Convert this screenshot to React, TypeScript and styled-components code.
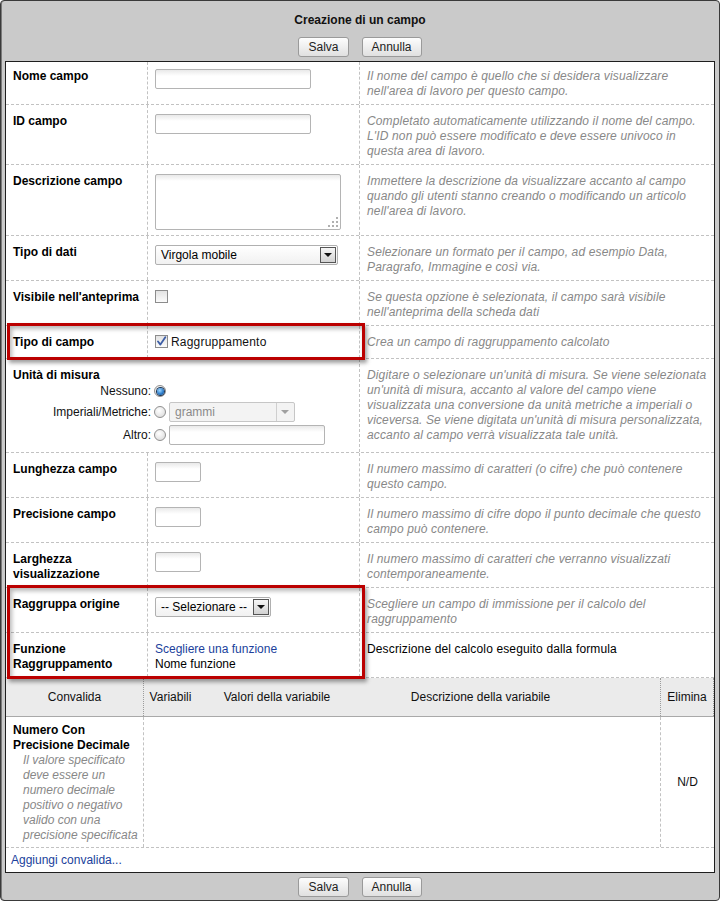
import React from "react";
import styled, { createGlobalStyle } from "styled-components";

const Global = createGlobalStyle`
  html, body { margin: 0; padding: 0; background: #fff; overflow: hidden; }
  body {
    font-family: "Liberation Sans", Arial, sans-serif;
    font-size: 12px;
    line-height: 15px;
    color: #000;
  }
  * { box-sizing: border-box; }
`;

const Frame = styled.div`
  width: 720px;
  border: 1px solid #3a3a3a;
  border-radius: 4px;
  background: #cacaca;
  padding: 0 4px 3px 4px;
  box-shadow: inset 1px 0 0 #7a7a7a;
`;

const Header = styled.div`
  display: flex;
  flex-direction: column;
  align-items: center;
  padding: 12px 0 4px;
`;

const Title = styled.div`
  font-weight: bold;
  color: #111;
`;

const ButtonBar = styled.div<{ $top?: number }>`
  display: flex;
  justify-content: center;
  gap: 13px;
  margin-top: ${(p) => p.$top ?? 0}px;
`;

const Button = styled.button`
  height: 20px;
  padding: 0 9px;
  font: 12px "Liberation Sans", Arial, sans-serif;
  color: #222;
  border: 1px solid #9a9a9a;
  border-radius: 3px;
  background: linear-gradient(#fdfdfd, #e0e0e0);
`;

const Panel = styled.div`
  background: #fff;
  border: 1px solid #1e1e1e;
`;

const FormRow = styled.div<{ $first?: boolean }>`
  display: grid;
  grid-template-columns: 142px 212px 1fr;
  border-bottom: 1px dashed #c2c2c2;
  & > * {
    padding: ${(p) => (p.$first ? 7 : 9)}px 4px 5px 7px;
  }
`;

const LabelCell = styled.div`
  font-weight: bold;
  color: #000;
  border-right: 1px dashed #c2c2c2;
`;

const FieldCell = styled.div`
  border-right: 1px dashed #c2c2c2;
`;

const WideCell = styled.div`
  grid-column: span 2;
  border-right: 1px dashed #c2c2c2;
`;

const DescCell = styled.div<{ $plain?: boolean }>`
  font-style: ${(p) => (p.$plain ? "normal" : "italic")};
  color: ${(p) => (p.$plain ? "#000" : "#888")};
  letter-spacing: 0.14px;
`;

const Bold = styled.div`
  font-weight: bold;
`;

const Highlight = styled.div`
  position: relative;
  &::after {
    content: "";
    position: absolute;
    left: 1px;
    top: -3px;
    bottom: -1px;
    width: 352px;
    border: 3px solid #bb0000;
    box-shadow: 2px 3px 4px rgba(0, 0, 0, 0.38), inset 2px 3px 4px rgba(0, 0, 0, 0.28);
    pointer-events: none;
  }
`;

const TextInput = styled.input<{ $w: number }>`
  display: block;
  width: ${(p) => p.$w}px;
  height: 20px;
  margin: 0;
  padding: 0 4px;
  border: 1px solid #b4b4b4;
  border-radius: 2px;
  background: linear-gradient(#e9e9e9, #fff 6px);
  font: 12px "Liberation Sans", Arial, sans-serif;
  outline: none;
`;

const TextArea = styled.div`
  display: flex;
  align-items: flex-end;
  justify-content: flex-end;
  width: 186px;
  height: 56px;
  padding: 2px;
  border: 1px solid #b4b4b4;
  border-radius: 2px;
  background: linear-gradient(#e9e9e9, #fff 6px);
`;

const SelectBox = styled.div<{ $w: number; $disabled?: boolean }>`
  display: flex;
  align-items: center;
  width: ${(p) => p.$w}px;
  height: 20px;
  padding-left: 5px;
  border: 1px solid ${(p) => (p.$disabled ? "#c6c6c6" : "#b0b0b0")};
  border-radius: 2px;
  background: ${(p) => (p.$disabled ? "#f3f3f3" : "linear-gradient(#fff, #f1f1f1)")};
  color: ${(p) => (p.$disabled ? "#8a8a8a" : "#000")};
`;

const SelectText = styled.span`
  flex: 1;
  white-space: nowrap;
`;

const ArrowBox = styled.span<{ $disabled?: boolean }>`
  display: flex;
  align-items: center;
  justify-content: center;
  width: ${(p) => (p.$disabled ? 17 : 16)}px;
  height: ${(p) => (p.$disabled ? 18 : 16)}px;
  margin-right: 1px;
  border: ${(p) => (p.$disabled ? "none" : "1px solid #555")};
  border-left: 1px solid ${(p) => (p.$disabled ? "#cfcfcf" : "#555")};
  background: ${(p) => (p.$disabled ? "#f3f3f3" : "linear-gradient(#f6f6f6, #d2d2d2)")};
`;

const Caret = styled.span<{ $disabled?: boolean }>`
  width: 0;
  height: 0;
  border-left: 4px solid transparent;
  border-right: 4px solid transparent;
  border-top: 4px solid ${(p) => (p.$disabled ? "#a0a0a0" : "#111")};
`;

const Check = styled.span`
  display: flex;
  align-items: center;
  justify-content: center;
  flex: none;
  width: 13px;
  height: 13px;
  border: 1px solid #8c8c8c;
  background: linear-gradient(#e2e2e2, #fbfbfb);
`;

const CheckLine = styled.div`
  display: flex;
  align-items: flex-start;
  gap: 3px;
  min-height: 18px;
  color: #111;
  letter-spacing: 0.2px;
`;

const UnitGrid = styled.div`
  display: grid;
  grid-template-columns: 138px 12px auto;
  grid-template-rows: 16px 20px 20px;
  column-gap: 3px;
  row-gap: 3px;
  align-items: center;
  justify-items: start;
  margin-bottom: 2px;
`;

const UnitLabel = styled.span`
  justify-self: end;
  color: #111;
  white-space: nowrap;
`;

const Radio = styled.span<{ $on?: boolean }>`
  display: flex;
  align-items: center;
  justify-content: center;
  width: 12px;
  height: 12px;
  border-radius: 50%;
  border: 1px solid #8f8f8f;
  background: radial-gradient(circle at 40% 35%, #fff, #d6d6d6);
  &::after {
    content: "";
    display: ${(p) => (p.$on ? "block" : "none")};
    width: 7px;
    height: 7px;
    border-radius: 50%;
    background: radial-gradient(circle at 40% 35%, #9fd8ff, #2577c8 60%, #0e3d78);
    box-shadow: 0 0 0 1px #1d3553;
  }
`;

const Link = styled.a`
  color: #203f9c;
  text-decoration: none;
`;

const ValGrid = styled.div`
  display: grid;
  grid-template-columns: 138px 53px 160px 247px 56px 1fr;
`;

const ValHead = styled(ValGrid)`
  background: #ebebeb;
  border-bottom: 1px solid #a9a9a9;
`;

const HeadCell = styled.div<{ $divR?: boolean; $divL?: boolean }>`
  text-align: center;
  white-space: nowrap;
  color: #111;
  padding: 12px 0 11px;
  border-right: ${(p) => (p.$divR ? "1px dotted #9c9c9c" : "none")};
  border-left: ${(p) => (p.$divL ? "1px dotted #9c9c9c" : "none")};
`;

const ValBody = styled(ValGrid)`
  border-bottom: 1px dashed #c2c2c2;
`;

const RuleCell = styled.div`
  padding: 6px 3px 4px 7px;
  border-right: 1px dashed #c2c2c2;
`;

const RuleDesc = styled.div`
  padding-left: 10px;
  font-style: italic;
  color: #888;
`;

const EmptyCell = styled.div`
  grid-column: 2 / 6;
`;

const DelCell = styled.div`
  display: flex;
  align-items: center;
  justify-content: center;
  border-left: 1px dashed #c2c2c2;
  color: #111;
`;

const AddRow = styled.div`
  padding: 5px 5px 4px;
`;

function Grip() {
  const dots = [
    [9, 1],
    [5, 5],
    [9, 5],
    [1, 9],
    [5, 9],
    [9, 9],
  ];
  return (
    <svg width="11" height="11" viewBox="0 0 11 11">
      {dots.map(([x, y]) => (
        <rect key={`${x}-${y}`} x={x} y={y} width="2" height="2" fill="#b0b0b0" />
      ))}
    </svg>
  );
}

function CheckMark() {
  return (
    <svg width="11" height="11" viewBox="0 0 11 11">
      <path d="M2 5.5 L4.4 8.6 L9.3 1.2" fill="none" stroke="#3d5ea6" strokeWidth="1.8" strokeLinecap="round" strokeLinejoin="round" />
    </svg>
  );
}

function Select({ w, text, disabled }: { w: number; text: string; disabled?: boolean }) {
  return (
    <SelectBox $w={w} $disabled={disabled}>
      <SelectText>{text}</SelectText>
      <ArrowBox $disabled={disabled}>
        <Caret $disabled={disabled} />
      </ArrowBox>
    </SelectBox>
  );
}

export default function App() {
  return (
    <>
      <Global />
      <Frame>
        <Header>
          <Title>Creazione di un campo</Title>
          <ButtonBar $top={9}>
            <Button>Salva</Button>
            <Button>Annulla</Button>
          </ButtonBar>
        </Header>
        <Panel>
          <FormRow $first>
            <LabelCell>Nome campo</LabelCell>
            <FieldCell>
              <TextInput $w={156} readOnly />
            </FieldCell>
            <DescCell>Il nome del campo è quello che si desidera visualizzare nell'area di lavoro per questo campo.</DescCell>
          </FormRow>
          <FormRow>
            <LabelCell>ID campo</LabelCell>
            <FieldCell>
              <TextInput $w={156} readOnly />
            </FieldCell>
            <DescCell>
              Completato automaticamente utilizzando il nome del campo. L'ID non può essere modificato e deve essere univoco in questa area di lavoro.
            </DescCell>
          </FormRow>
          <FormRow>
            <LabelCell>Descrizione campo</LabelCell>
            <FieldCell>
              <TextArea>
                <Grip />
              </TextArea>
            </FieldCell>
            <DescCell>
              Immettere la descrizione da visualizzare accanto al campo quando gli utenti stanno creando o modificando un articolo nell'area di lavoro.
            </DescCell>
          </FormRow>
          <FormRow>
            <LabelCell>Tipo di dati</LabelCell>
            <FieldCell>
              <Select w={183} text="Virgola mobile" />
            </FieldCell>
            <DescCell>Selezionare un formato per il campo, ad esempio Data, Paragrafo, Immagine e così via.</DescCell>
          </FormRow>
          <FormRow>
            <LabelCell>Visibile nell'anteprima</LabelCell>
            <FieldCell>
              <Check />
            </FieldCell>
            <DescCell>Se questa opzione è selezionata, il campo sarà visibile nell'anteprima della scheda dati</DescCell>
          </FormRow>
          <Highlight>
            <FormRow>
              <LabelCell>Tipo di campo</LabelCell>
              <FieldCell>
                <CheckLine>
                  <Check>
                    <CheckMark />
                  </Check>
                  <span>Raggruppamento</span>
                </CheckLine>
              </FieldCell>
              <DescCell>Crea un campo di raggruppamento calcolato</DescCell>
            </FormRow>
          </Highlight>
          <FormRow>
            <WideCell>
              <Bold>Unità di misura</Bold>
              <UnitGrid>
                <UnitLabel>Nessuno:</UnitLabel>
                <Radio $on />
                <span />
                <UnitLabel>Imperiali/Metriche:</UnitLabel>
                <Radio />
                <Select w={126} text="grammi" disabled />
                <UnitLabel>Altro:</UnitLabel>
                <Radio />
                <TextInput $w={156} readOnly />
              </UnitGrid>
            </WideCell>
            <DescCell>
              Digitare o selezionare un'unità di misura. Se viene selezionata un'unità di misura, accanto al valore del campo viene visualizzata una conversione da unità metriche a imperiali o viceversa. Se viene digitata un'unità di misura personalizzata, accanto al campo verrà visualizzata tale unità.
            </DescCell>
          </FormRow>
          <FormRow>
            <LabelCell>Lunghezza campo</LabelCell>
            <FieldCell>
              <TextInput $w={46} readOnly />
            </FieldCell>
            <DescCell>Il numero massimo di caratteri (o cifre) che può contenere questo campo.</DescCell>
          </FormRow>
          <FormRow>
            <LabelCell>Precisione campo</LabelCell>
            <FieldCell>
              <TextInput $w={46} readOnly />
            </FieldCell>
            <DescCell>Il numero massimo di cifre dopo il punto decimale che questo campo può contenere.</DescCell>
          </FormRow>
          <FormRow>
            <LabelCell>Larghezza visualizzazione</LabelCell>
            <FieldCell>
              <TextInput $w={46} readOnly />
            </FieldCell>
            <DescCell>Il numero massimo di caratteri che verranno visualizzati contemporaneamente.</DescCell>
          </FormRow>
          <Highlight>
            <FormRow>
              <LabelCell>Raggruppa origine</LabelCell>
              <FieldCell>
                <Select w={116} text="-- Selezionare --" />
              </FieldCell>
              <DescCell>Scegliere un campo di immissione per il calcolo del raggruppamento</DescCell>
            </FormRow>
            <FormRow>
              <LabelCell>Funzione Raggruppamento</LabelCell>
              <FieldCell>
                <div>
                  <Link href="#">Scegliere una funzione</Link>
                </div>
                <div>Nome funzione</div>
              </FieldCell>
              <DescCell $plain>Descrizione del calcolo eseguito dalla formula</DescCell>
            </FormRow>
          </Highlight>
          <ValHead>
            <HeadCell $divR>Convalida</HeadCell>
            <HeadCell>Variabili</HeadCell>
            <HeadCell>Valori della variabile</HeadCell>
            <HeadCell>Descrizione della variabile</HeadCell>
            <HeadCell />
            <HeadCell $divL $divR>
              Elimina
            </HeadCell>
          </ValHead>
          <ValBody>
            <RuleCell>
              <Bold>Numero Con Precisione Decimale</Bold>
              <RuleDesc>Il valore specificato deve essere un numero decimale positivo o negativo valido con una precisione specificata</RuleDesc>
            </RuleCell>
            <EmptyCell />
            <DelCell>N/D</DelCell>
          </ValBody>
          <AddRow>
            <Link href="#">Aggiungi convalida...</Link>
          </AddRow>
        </Panel>
        <ButtonBar $top={4}>
          <Button>Salva</Button>
          <Button>Annulla</Button>
        </ButtonBar>
      </Frame>
    </>
  );
}
